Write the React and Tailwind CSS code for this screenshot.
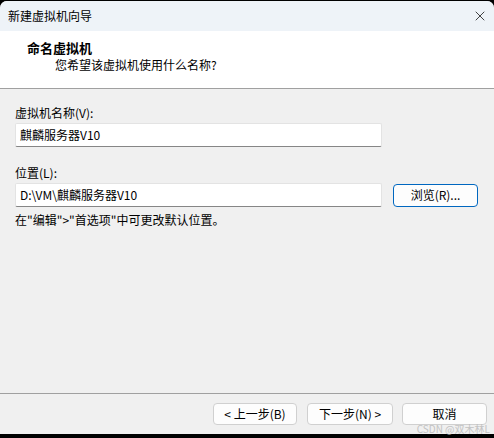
import { X } from "lucide-react";

const font = { fontFamily: '"Microsoft YaHei UI", "Noto Sans CJK SC", "Noto Sans", sans-serif' };

const Field = ({ value, className = "" }) => (
  <div
    className={`h-[24px] bg-white border border-[#e3e3e3] border-b-[#868686] rounded-[2px] flex items-center px-[4px] text-[12px] text-black ${className}`}
  >
    {value}
  </div>
);

const Btn = ({ children, primary = false, className = "" }) => (
  <button
    className={`h-[22px] bg-[#fdfdfd] border rounded-[4px] text-[12px] leading-[12px] text-black flex items-center justify-center ${
      primary ? "border-[#0067c0]" : "border-[#d0d0d0]"
    } ${className}`}
  >
    {children}
  </button>
);

export default function App() {
  return (
    <div className="w-[494px] h-[438px] bg-black pt-px relative overflow-hidden" style={font}>
      <div className="h-[433px] bg-[#f0f0f0] rounded-t-[7px] overflow-hidden flex flex-col">
        {/* title bar */}
        <div className="h-[30px] bg-[#eef3f8] flex items-center justify-between pl-[8px] pr-[6px]">
          <span className="text-[12px] text-black">新建虚拟机向导</span>
          <X size={16} strokeWidth={1.1} className="text-black" />
        </div>

        {/* header */}
        <div className="h-[58px] bg-white border-b border-[#a0a0a0] pt-[8px]">
          <div className="pl-[27px] text-[13px] font-bold leading-[18px] text-black">命名虚拟机</div>
          <div className="pl-[55px] text-[12px] leading-[16px] text-black">您希望该虚拟机使用什么名称?</div>
        </div>

        {/* body */}
        <div className="flex-1 px-[15px] pt-[16px] text-[12px] text-black">
          <div className="leading-[16px] mb-[2px]">虚拟机名称(V):</div>
          <Field value="麒麟服务器V10" className="w-[367px]" />

          <div className="leading-[16px] mt-[18px] mb-[2px]">位置(L):</div>
          <div className="flex items-center">
            <Field value="D:\VM\麒麟服务器V10" className="w-[367px]" />
            <Btn primary className="ml-[11px] w-[85px] h-[23px]">浏览(R)...</Btn>
          </div>
          <div className="leading-[16px] mt-[5px]">在"编辑"&gt;"首选项"中可更改默认位置。</div>
        </div>

        {/* footer */}
        <div className="h-[41px] border-t border-[#a0a0a0] flex justify-end items-start pt-[9px] pr-[7px]">
          <Btn className="w-[84px]">&lt; 上一步(B)</Btn>
          <Btn className="w-[86px] ml-[10px]">下一步(N) &gt;</Btn>
          <Btn className="w-[85px] ml-[9px]">取消</Btn>
        </div>
      </div>

      <span className="absolute right-[4px] top-[424px] text-[10px] leading-[9px] text-[#b8b8b8] opacity-80">
        CSDN @双木林L
      </span>
    </div>
  );
}
